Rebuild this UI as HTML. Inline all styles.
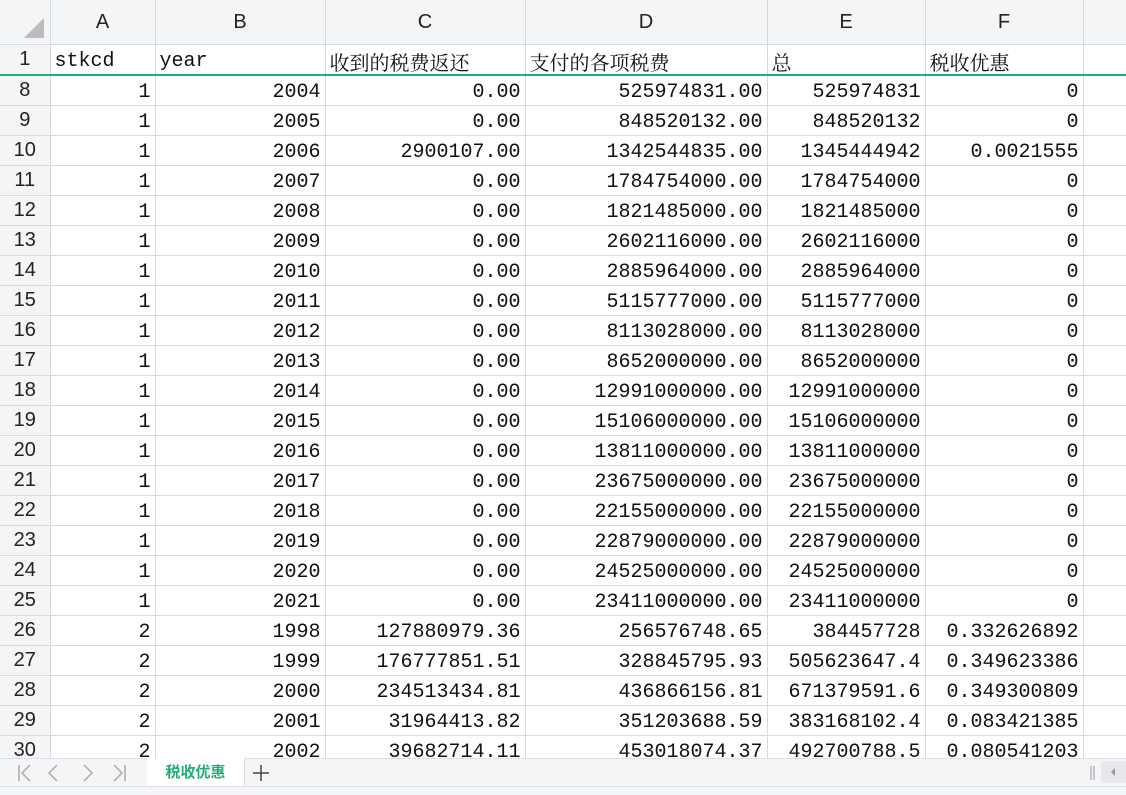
<!DOCTYPE html>
<html><head><meta charset="utf-8"><style>
html,body{margin:0;width:1126px;height:795px;overflow:hidden}
body{background:#fff;position:relative;font-family:"Liberation Mono","Noto Serif CJK SC",monospace}
table{border-collapse:collapse;table-layout:fixed;position:absolute;left:0;top:0;width:1143px}
td{border:1px solid #d5d9e3;padding:0 4px;height:29px;font-size:20px;color:#111;white-space:nowrap;overflow:hidden;text-align:right;line-height:24px;vertical-align:bottom}
tr.h td{height:44px;background:#f4f5f7;font-family:"Liberation Sans",sans-serif;text-align:center;color:#222;font-size:20px;border-top:none;line-height:44px;vertical-align:middle}
td.r{background:#f4f5f7;font-family:"Liberation Sans",sans-serif;text-align:center;color:#222;border-left:none;padding:0;line-height:29px;vertical-align:middle}
td.l{text-align:left}
tr.one td{border-bottom:2px solid #1fae73;height:28px}
.cj{font-family:"Noto Serif CJK SC",serif;font-size:20px}
.tab{position:absolute;left:0;top:758px;width:1126px;height:28px;background:#f4f5f7;border-top:1px solid #dde0e6;z-index:2}
.bot{position:absolute;left:0;top:786px;width:1126px;height:9px;background:#f4f5f7;border-top:1px solid #dde0e6;z-index:2}
</style></head><body>
<table>
<colgroup><col style="width:50px"><col style="width:105px"><col style="width:170px"><col style="width:200px"><col style="width:242px"><col style="width:158px"><col style="width:158px"><col style="width:60px"></colgroup>
<tr class="h"><td class="r" style="position:relative"><svg width="20" height="20" style="position:absolute;left:24px;top:18px"><polygon points="20,0 20,20 0,20" fill="#bcbcbc"/></svg></td><td>A</td><td>B</td><td>C</td><td>D</td><td>E</td><td>F</td><td></td></tr>
<tr class="one"><td class="r">1</td><td class="l">stkcd</td><td class="l">year</td><td class="l cj">收到的税费返还</td><td class="l cj">支付的各项税费</td><td class="l cj">总</td><td class="l cj">税收优惠</td><td></td></tr>
<tr><td class="r">8</td><td>1</td><td>2004</td><td>0.00</td><td>525974831.00</td><td>525974831</td><td>0</td><td></td></tr>
<tr><td class="r">9</td><td>1</td><td>2005</td><td>0.00</td><td>848520132.00</td><td>848520132</td><td>0</td><td></td></tr>
<tr><td class="r">10</td><td>1</td><td>2006</td><td>2900107.00</td><td>1342544835.00</td><td>1345444942</td><td>0.0021555</td><td></td></tr>
<tr><td class="r">11</td><td>1</td><td>2007</td><td>0.00</td><td>1784754000.00</td><td>1784754000</td><td>0</td><td></td></tr>
<tr><td class="r">12</td><td>1</td><td>2008</td><td>0.00</td><td>1821485000.00</td><td>1821485000</td><td>0</td><td></td></tr>
<tr><td class="r">13</td><td>1</td><td>2009</td><td>0.00</td><td>2602116000.00</td><td>2602116000</td><td>0</td><td></td></tr>
<tr><td class="r">14</td><td>1</td><td>2010</td><td>0.00</td><td>2885964000.00</td><td>2885964000</td><td>0</td><td></td></tr>
<tr><td class="r">15</td><td>1</td><td>2011</td><td>0.00</td><td>5115777000.00</td><td>5115777000</td><td>0</td><td></td></tr>
<tr><td class="r">16</td><td>1</td><td>2012</td><td>0.00</td><td>8113028000.00</td><td>8113028000</td><td>0</td><td></td></tr>
<tr><td class="r">17</td><td>1</td><td>2013</td><td>0.00</td><td>8652000000.00</td><td>8652000000</td><td>0</td><td></td></tr>
<tr><td class="r">18</td><td>1</td><td>2014</td><td>0.00</td><td>12991000000.00</td><td>12991000000</td><td>0</td><td></td></tr>
<tr><td class="r">19</td><td>1</td><td>2015</td><td>0.00</td><td>15106000000.00</td><td>15106000000</td><td>0</td><td></td></tr>
<tr><td class="r">20</td><td>1</td><td>2016</td><td>0.00</td><td>13811000000.00</td><td>13811000000</td><td>0</td><td></td></tr>
<tr><td class="r">21</td><td>1</td><td>2017</td><td>0.00</td><td>23675000000.00</td><td>23675000000</td><td>0</td><td></td></tr>
<tr><td class="r">22</td><td>1</td><td>2018</td><td>0.00</td><td>22155000000.00</td><td>22155000000</td><td>0</td><td></td></tr>
<tr><td class="r">23</td><td>1</td><td>2019</td><td>0.00</td><td>22879000000.00</td><td>22879000000</td><td>0</td><td></td></tr>
<tr><td class="r">24</td><td>1</td><td>2020</td><td>0.00</td><td>24525000000.00</td><td>24525000000</td><td>0</td><td></td></tr>
<tr><td class="r">25</td><td>1</td><td>2021</td><td>0.00</td><td>23411000000.00</td><td>23411000000</td><td>0</td><td></td></tr>
<tr><td class="r">26</td><td>2</td><td>1998</td><td>127880979.36</td><td>256576748.65</td><td>384457728</td><td>0.332626892</td><td></td></tr>
<tr><td class="r">27</td><td>2</td><td>1999</td><td>176777851.51</td><td>328845795.93</td><td>505623647.4</td><td>0.349623386</td><td></td></tr>
<tr><td class="r">28</td><td>2</td><td>2000</td><td>234513434.81</td><td>436866156.81</td><td>671379591.6</td><td>0.349300809</td><td></td></tr>
<tr><td class="r">29</td><td>2</td><td>2001</td><td>31964413.82</td><td>351203688.59</td><td>383168102.4</td><td>0.083421385</td><td></td></tr>
<tr><td class="r">30</td><td>2</td><td>2002</td><td>39682714.11</td><td>453018074.37</td><td>492700788.5</td><td>0.080541203</td><td></td></tr>
</table>
<div class="tab">
<svg width="140" height="28" style="position:absolute;left:10px;top:0" fill="none" stroke="#aaa" stroke-width="1.5"><path d="M9 6v16M20 6l-8 8 8 8"/><path d="M47 6l-8 8 8 8"/><path d="M74 6l8 8-8 8"/><path d="M104 6l8 8-8 8M115 6v16"/></svg>
<div style="position:absolute;left:147px;top:-1px;width:97px;height:28px;background:#fff;border-right:1px solid #dde0e6;color:#1fae73;font-family:'Noto Sans CJK SC',sans-serif;font-weight:bold;font-size:15px;text-align:center;line-height:28px">税收优惠</div>
<svg width="20" height="20" style="position:absolute;left:251px;top:4px" stroke="#444" stroke-width="1.5"><path d="M10 2v16M2 10h16"/></svg>
<svg width="10" height="20" style="position:absolute;left:1088px;top:4px" stroke="#999"><path d="M3 3v14M6 3v14"/></svg>
<div style="position:absolute;left:1101px;top:2px;width:25px;height:22px;background:#e6e8ec"><svg width="25" height="22"><polygon points="10,11 14,7 14,15" fill="#999"/></svg></div>
</div>
<div class="bot"></div>
</body></html>
